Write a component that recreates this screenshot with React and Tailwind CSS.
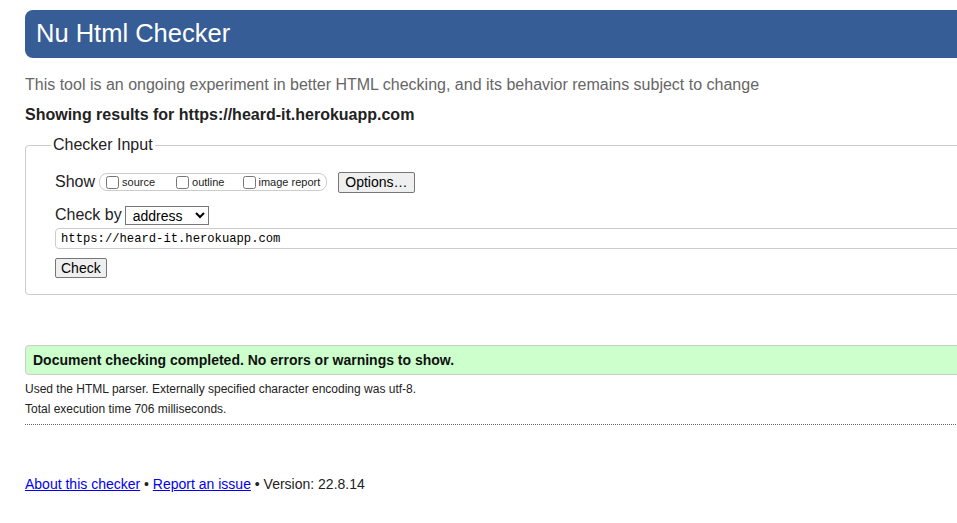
import React from "react";

const App = () => {
  return (
    <div className="w-full overflow-hidden bg-white font-['Liberation_Sans',Arial,sans-serif]">
      <div className="w-[1100px] pl-[25px] pt-[10px] pb-[40px]">
        {/* Header */}
        <h1 className="h-[48px] rounded-l-[8px] bg-[#375d96] pl-[11px] text-[25.5px] leading-[47px] text-white">
          Nu Html Checker
        </h1>

        <p className="mt-[17px] text-[16px] leading-[20px] text-[#666]">
          This tool is an ongoing experiment in better HTML checking, and its behavior remains subject to change
        </p>
        <p className="mt-[10px] text-[16px] font-bold leading-[20px] text-[#222]">
          Showing results for https://heard-it.herokuapp.com
        </p>

        {/* Checker Input */}
        <fieldset className="mt-[11px] rounded-[4px] border border-[#ccc] pb-[14px] pl-[29px] pt-[16px]">
          <legend className="-ml-[4px] px-[2px] text-[16px] leading-[18px] text-[#222]">Checker Input</legend>

          <div className="flex items-center">
            <span className="text-[16px] text-[#222]">Show</span>
            <div className="ml-[4px] flex h-[18px] items-center rounded-[8px] border border-[#ccc] pl-[6px] pr-[6px] text-[11px] text-[#222]">
              <label className="flex items-center">
                <input type="checkbox" className="m-0 h-[13px] w-[13px]" />
                <span className="ml-[3px]">source</span>
              </label>
              <label className="ml-[21px] flex items-center">
                <input type="checkbox" className="m-0 h-[13px] w-[13px]" />
                <span className="ml-[3px]">outline</span>
              </label>
              <label className="ml-[19px] flex items-center">
                <input type="checkbox" className="m-0 h-[13px] w-[13px]" />
                <span className="ml-[2px]">image report</span>
              </label>
            </div>
            <button className="ml-[11px] h-[21px] rounded-[2px] border border-[#767676] bg-[#efefef] px-[6px] text-[14px] leading-[18px] text-black">
              Options…
            </button>
          </div>

          <div className="mt-[9px] flex items-center">
            <span className="text-[16px] text-[#222]">Check by</span>
            <select className="ml-[3px] h-[19px] w-[84px] border border-[#767676] bg-white pl-[3px] text-[14px] leading-[16px] text-black">
              <option>address</option>
            </select>
          </div>

          <input
            type="text"
            defaultValue="https://heard-it.herokuapp.com"
            className="mt-[1px] block h-[21px] w-full rounded-[4px] border border-[#ccc] pl-[5px] font-['Liberation_Mono','DejaVu_Sans_Mono',monospace] text-[12.2px] text-black outline-none"
          />

          <button className="mt-[9px] h-[20px] rounded-[2px] border border-[#767676] bg-[#efefef] px-[5px] text-[14px] leading-[18px] text-black">
            Check
          </button>
        </fieldset>

        {/* Result */}
        <div className="mt-[50px] flex h-[30px] items-center rounded-l-[4px] border border-[#ccc] bg-[#ccffcc] pl-[7px] text-[14px] font-bold text-[#111]">
          Document checking completed. No errors or warnings to show.
        </div>

        <p className="mt-[7px] text-[12px] leading-[14px] text-[#222]">
          Used the HTML parser. Externally specified character encoding was utf-8.
        </p>
        <p className="mt-[6px] text-[12px] leading-[14px] text-[#222]">Total execution time 706 milliseconds.</p>
        <div className="mt-[8px] border-t border-dotted border-[#666]"></div>

        {/* Footer */}
        <p className="mt-[50px] text-[14px] leading-[18px] text-[#222]">
          <a href="#" className="text-[#0000ee] underline">About this checker</a>
          {" • "}
          <a href="#" className="text-[#0000ee] underline">Report an issue</a>
          {" • Version: 22.8.14"}
        </p>
      </div>
    </div>
  );
};

export default App;
